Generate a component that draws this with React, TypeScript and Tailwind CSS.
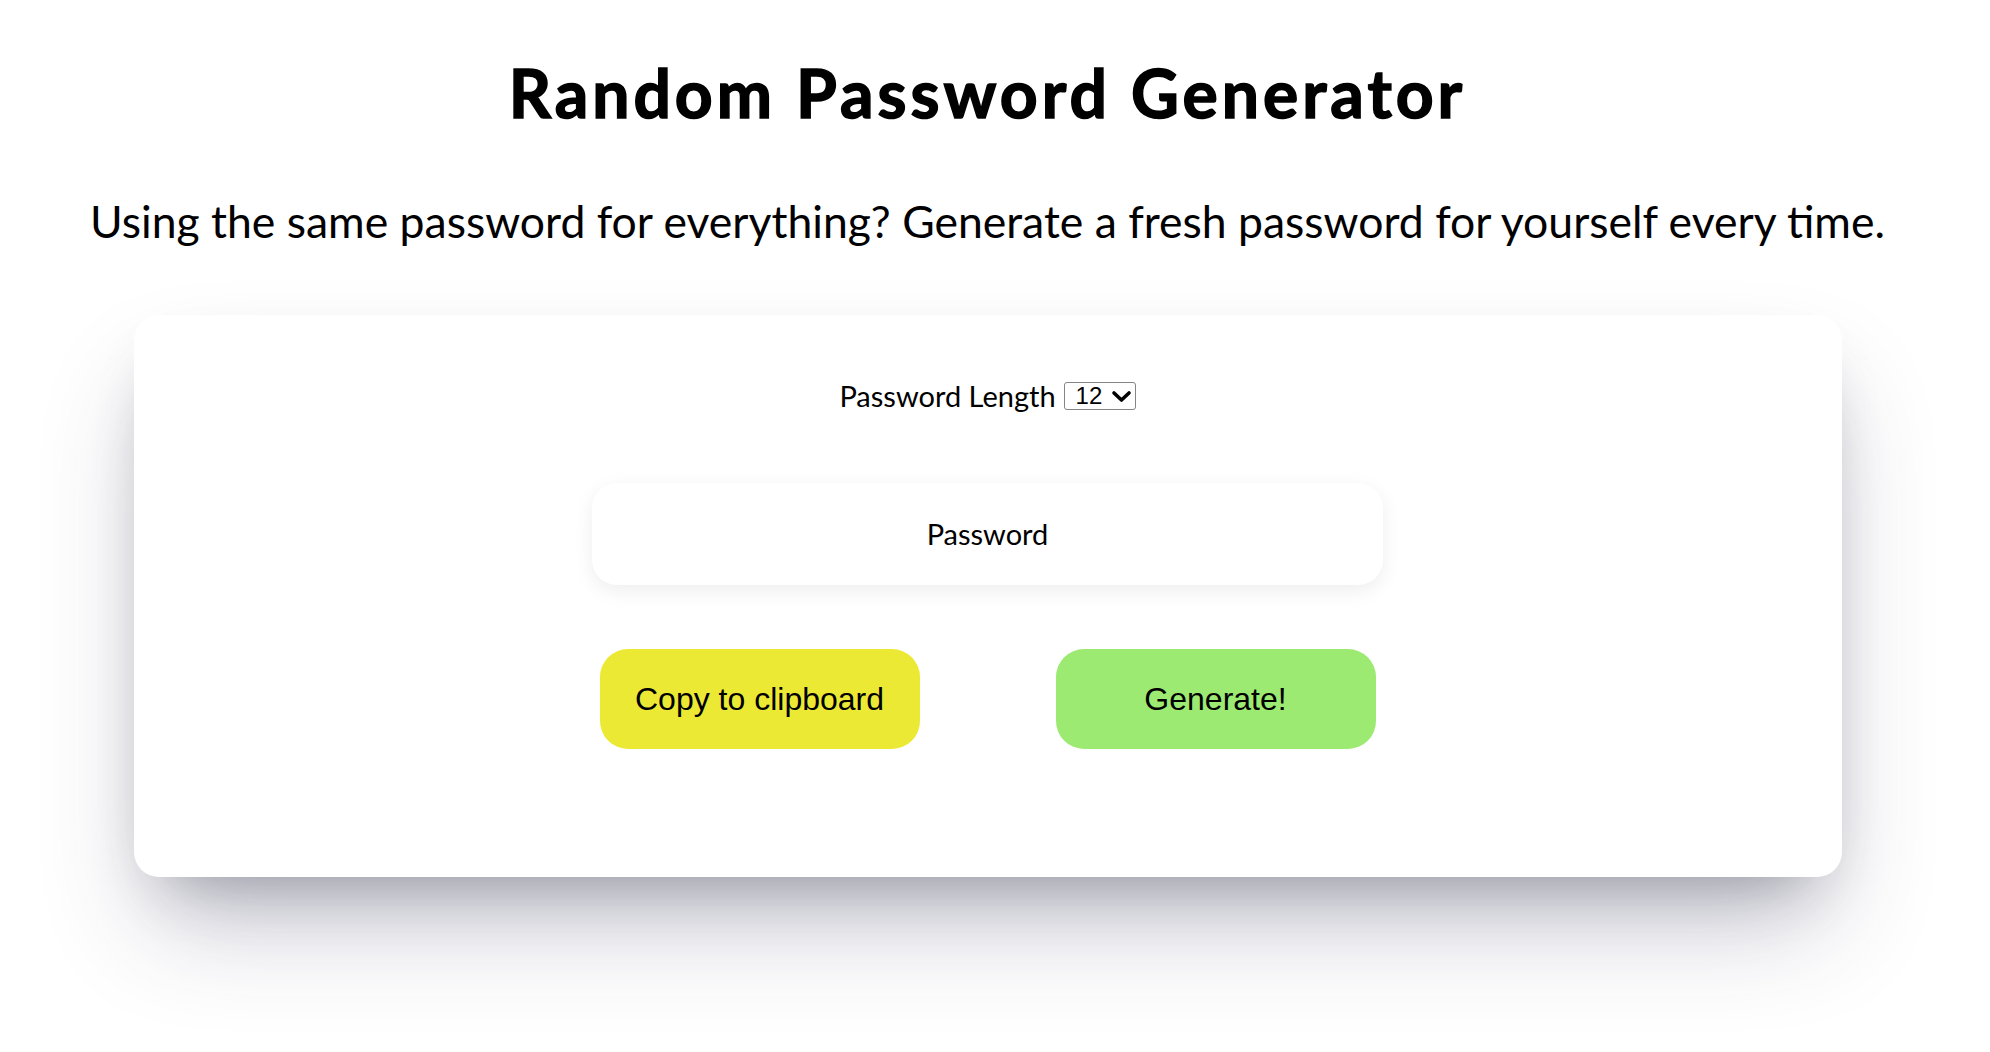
import React, { useState } from "react";

export default function App() {
  const [len, setLen] = useState("12");
  return (
    <div className="min-h-[1052px] w-full bg-white pr-[15px] text-black" style={{ fontFamily: "Lato, 'Open Sans', sans-serif" }}>
      <div className="flex flex-col items-center">
        <h1 className="mt-[60px] text-[66px] leading-none font-bold tracking-[4px] [-webkit-text-stroke:1.5px_#000]">
          Random Password Generator
        </h1>
        <p className="mt-[73px] text-[44.5px] leading-none">
          Using the same password for everything? Generate a fresh password for yourself every time.
        </p>
        <div className="mt-[71px] flex w-[1708px] flex-col items-center rounded-[25px] bg-white pt-[67px] pb-[128px] shadow-[0_60px_110px_-20px_rgba(50,50,93,0.3),0_30px_60px_-30px_rgba(0,0,0,0.3)]">
          <div className="flex h-[28px] items-center gap-[8px]">
            <label htmlFor="len" className="text-[29px] leading-[28px]">Password Length</label>
            <div className="relative h-[28px] w-[72px]">
              <select
                id="len"
                value={len}
                onChange={(e) => setLen(e.target.value)}
                className="h-[28px] w-[72px] appearance-none rounded-[3px] border border-[#858585] bg-white pl-[11px] text-[24px] leading-[26px] outline-none"
                style={{ fontFamily: "'Liberation Sans', Arial, sans-serif" }}
              >
                {[8, 10, 12, 14, 16, 20, 24].map((n) => (
                  <option key={n} value={String(n)}>{n}</option>
                ))}
              </select>
              <svg className="pointer-events-none absolute right-[4px] top-[8px]" width="21" height="13" viewBox="0 0 21 13" fill="none">
                <path d="M3 3 L10.5 10 L18 3" stroke="#000" strokeWidth="3.6" strokeLinecap="round" strokeLinejoin="round" />
              </svg>
            </div>
          </div>
          <input
            readOnly
            placeholder="Password"
            className="mt-[73px] h-[102px] w-[791px] rounded-[25px] bg-white text-center text-[29px] outline-none placeholder:text-black shadow-[0_6px_20px_rgba(0,0,0,0.07)]"
          />
          <div className="mt-[64px] flex gap-[136px]" style={{ fontFamily: "'Liberation Sans', Arial, sans-serif" }}>
            <button className="h-[100px] w-[320px] rounded-[28px] bg-[#ECE935] text-[32px] text-black">Copy to clipboard</button>
            <button className="h-[100px] w-[320px] rounded-[28px] bg-[#9DEA73] text-[32px] text-black">Generate!</button>
          </div>
        </div>
      </div>
    </div>
  );
}
